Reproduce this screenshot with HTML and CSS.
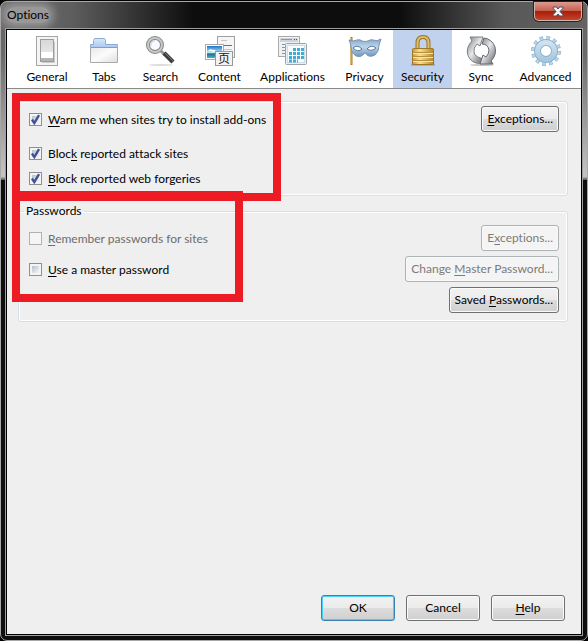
FILE: index.html
```html
<!DOCTYPE html>
<html lang="en">
<head>
    <meta charset="UTF-8">
    <meta name="viewport" content="width=device-width, initial-scale=1.0">
    <title>Options</title>
    <link rel="stylesheet" href="styles.css">
</head>
<body>
    <div class="window">
        <header class="titlebar">
            <h1>Options</h1>
            <button type="button" class="close-button" aria-label="Close">
                <svg width="12" height="11" viewBox="0 0 12 11"><path d="M1 1h3.4L6 3 7.600 1H11v1.200L8 5.500l3 3.300V10H7.600L6 8 4.400 10H1V8.800l3-3.300-3-3.300z" fill="#f4f4f4" stroke="#4a5068" stroke-width="1"/></svg>
            </button>
        </header>
        <div class="dialog">
            <nav class="toolbar">
                <button type="button" class="tab">
                    <svg width="32" height="32" viewBox="0 0 32 32">
                        <defs><linearGradient id="sw" x2="0" y2="1"><stop offset="0" stop-color="#d8d8d8"/><stop offset="1" stop-color="#eee"/></linearGradient></defs>
                        <rect x="5.500" y="1.500" width="21" height="29" fill="#f4f4f4" stroke="#a5a5a5"/>
                        <rect x="9.500" y="4.500" width="13" height="22" fill="url(#sw)" stroke="#9c9c9c"/>
                        <path d="M10 17h12v6H10z" fill="#fff"/><path d="M10 23h12v3H10z" fill="#b5b5b5"/><path d="M11 27.500h12.500V7" fill="none" stroke="#ccc"/>
                    </svg>
                    <span>General</span>
                </button>
                <button type="button" class="tab">
                    <svg width="32" height="32" viewBox="0 0 32 32">
                        <defs>
                            <linearGradient id="fd" x2="1" y2="1"><stop offset="0" stop-color="#e8e8e8"/><stop offset=".5" stop-color="#fbfbfb"/><stop offset="1" stop-color="#dedede"/></linearGradient>
                            <linearGradient id="fb" x2="0" y2="1"><stop offset="0" stop-color="#d8e8fc"/><stop offset="1" stop-color="#a9c8f0"/></linearGradient>
                        </defs>
                        <path d="M2.500 12.500v-3h3v-4l1-2h10l1 2v4h12v3z" fill="url(#fb)" stroke="#8fabd2"/>
                        <path d="M2.500 12.500h27v15h-27z" fill="url(#fd)" stroke="#aaa"/>
                        <path d="M3 12.500h26" stroke="#7e9fcd"/>
                    </svg>
                    <span>Tabs</span>
                </button>
                <button type="button" class="tab">
                    <svg width="32" height="32" viewBox="0 0 32 32">
                        <ellipse cx="16" cy="30" rx="12" ry="1" fill="#ddd"/>
                        <path d="M15 15l5 5" stroke="#999" stroke-width="3"/>
                        <path d="M19 18l9 9" stroke="#3d3d3d" stroke-width="4.500"/>
                        <path d="M20 18l8 8" stroke="#777" stroke-width="1"/>
                        <circle cx="10" cy="10" r="7" fill="#f8faff" stroke="#858585" stroke-width="4"/>
                        <circle cx="10" cy="10" r="7" fill="none" stroke="#c9c9c9" stroke-width="2"/>
                        <path d="M6 11a4 4 0 0 1 4-5" fill="none" stroke="#c6d2f0"/>
                    </svg>
                    <span>Search</span>
                </button>
                <button type="button" class="tab">
                    <svg width="32" height="32" viewBox="0 0 32 32">
                        <defs><linearGradient id="sky" x2="0" y2="1"><stop offset="0" stop-color="#1c74c8"/><stop offset=".55" stop-color="#bce9fa"/><stop offset=".65" stop-color="#2b6b83"/><stop offset="1" stop-color="#37b7c9"/></linearGradient></defs>
                        <rect x="13.500" y="1.500" width="17" height="21" fill="#f5f5f5" stroke="#a0a0a0"/>
                        <path d="M17 5.500h6M17 14.500h11M17 18.500h11" stroke="#c5c5c5"/><path d="M17 10.500h11" stroke="#1692aa"/>
                        <rect x="1.500" y="9.500" width="18" height="15" fill="#fff" stroke="#aaa"/>
                        <rect x="3" y="11" width="15" height="12" fill="url(#sky)"/><path d="M4 16q2-3 5-1 2-1 3 2z" fill="#fff"/>
                        <rect x="11.500" y="16.500" width="17" height="14" fill="#f3f3f3" stroke="#999"/>
                        <text x="20" y="28" class="glyph">页</text>
                    </svg>
                    <span>Content</span>
                </button>
                <button type="button" class="tab">
                    <svg width="32" height="32" viewBox="0 0 32 32">
                        <rect x="1.500" y="1.500" width="21" height="20" fill="#f1f1f1" stroke="#aaa"/>
                        <path d="M3 3h18v4H3z" fill="#ced4dc"/><path d="M4 4.500h11" stroke="#8c98a9"/><path d="M17 4.500h4" stroke="#555" stroke-dasharray="1 1"/>
                        <path d="M5 9.500h3M5 12.500h3M5 15.500h3M5 18.500h3" stroke="#8a95a2"/>
                        <rect x="8.500" y="8.500" width="21" height="21" rx="1" fill="#e4f0f6" stroke="#9ba4aa"/>
                        <rect x="10.500" y="10.500" width="17" height="17" fill="#fafdff" stroke="#cbdde8"/>
                        <path d="M16 14.500h11M12 18.500h15M12 22.500h15M12 26h9" stroke="#42acd3" stroke-width="3" stroke-dasharray="3 1"/>
                    </svg>
                    <span>Applications</span>
                </button>
                <button type="button" class="tab">
                    <svg width="34" height="32" viewBox="0 0 34 32">
                        <defs><linearGradient id="mk" x2="0" y2="1"><stop offset="0" stop-color="#87a8cb"/><stop offset=".45" stop-color="#bdd5e8"/><stop offset="1" stop-color="#6e94ba"/></linearGradient></defs>
                        <path d="M3.500 2v28" stroke="#a87916" stroke-width="2"/><path d="M3 3v26" stroke="#e4bd50"/>
                        <path d="M1 5q4 2 8 0 3-1 5 1 3 1 6 0 3-2 5-1 4 2 8-1-1 3-2 6 0 7-4 10-6 3-9-1-1-3-2 0-3 4-8 2-5-3-5-10-1-4-2-6z" fill="url(#mk)" stroke="#7794b5"/>
                        <path d="M5 13q4-4 9 1-4 4-9-1zM19 14q4-5 9-1-4 4-9 1z" fill="#fff" stroke="#54789f"/>
                    </svg>
                    <span>Privacy</span>
                </button>
                <button type="button" class="tab selected" aria-current="page">
                    <svg width="32" height="32" viewBox="0 0 32 32">
                        <defs><linearGradient id="lk" x2="1" y2="0"><stop offset="0" stop-color="#c99a36"/><stop offset=".35" stop-color="#f5df93"/><stop offset="1" stop-color="#b88526"/></linearGradient></defs>
                        <path d="M4 30.500h24l-1-3H5z" fill="#6a6d78" opacity=".6"/>
                        <path d="M10.500 14V8q0-6 5.500-6t5.500 6v6" fill="none" stroke="#9a7427" stroke-width="4"/>
                        <path d="M10.500 14V8q0-6 5.500-6t5.500 6v6" fill="none" stroke="#dfbd67" stroke-width="2"/>
                        <rect x="5.500" y="13.500" width="21" height="16" rx="1" fill="url(#lk)" stroke="#9f7628"/>
                        <path d="M6 17.500h20M6 21.500h20M6 25.500h20" stroke="#b98f3c"/><path d="M6 18.500h20M6 22.500h20M6 26.500h20" stroke="#f8e5a5"/>
                    </svg>
                    <span>Security</span>
                </button>
                <button type="button" class="tab">
                    <svg width="32" height="32" viewBox="0 0 32 32">
                        <defs><linearGradient id="sy" x2="1" y2="1"><stop offset="0" stop-color="#777b80"/><stop offset=".45" stop-color="#e6e8ea"/><stop offset="1" stop-color="#5c6065"/></linearGradient></defs>
                        <ellipse cx="17" cy="30" rx="12" ry="1" fill="#c5c5c5"/>
                        <path d="M5 2h13l-3 9-3-2q-4 4-3 8 1 5 7 6l3 5q-9 2-14-4-5-7-1-14 1-2 3-4z" fill="url(#sy)" stroke="#7c8085"/>
                        <path d="M28 29H15l3-9 3 2q3-3 3-7-1-6-7-6l2-6q8 1 11 9 2 8-4 14z" fill="url(#sy)" stroke="#64686d"/>
                    </svg>
                    <span>Sync</span>
                </button>
                <button type="button" class="tab">
                    <svg width="32" height="32" viewBox="0 0 32 32">
                        <defs><linearGradient id="gr" x2="0" y2="1"><stop offset="0" stop-color="#d0e2f1"/><stop offset="1" stop-color="#a6c8e0"/></linearGradient></defs>
                        <circle cx="16" cy="16" r="13" fill="none" stroke="#8fb0cc" stroke-width="4" stroke-dasharray="3.600 3.207"/>
                        <circle cx="16" cy="16" r="12.500" fill="none" stroke="#bdd6e9" stroke-width="4" stroke-dasharray="2.200 4.345" stroke-dashoffset="-.6"/>
                        <circle cx="16" cy="16" r="8.500" fill="none" stroke="#8fb1cc" stroke-width="7"/>
                        <circle cx="16" cy="16" r="8.500" fill="none" stroke="url(#gr)" stroke-width="5"/>
                    </svg>
                    <span>Advanced</span>
                </button>
            </nav>
            <main class="pane">
                <form class="panel">
                    <div class="group">
                        <div class="checks">
                            <label class="check first"><input type="checkbox" checked><span><u>W</u>arn me when sites try to install add-ons</span></label>
                            <label class="check"><input type="checkbox" checked><span>Bloc<u>k</u> reported attack sites</span></label>
                            <label class="check"><input type="checkbox" checked><span><u>B</u>lock reported web forgeries</span></label>
                        </div>
                        <div class="actions">
                            <button type="button" class="button"><span><u>E</u>xceptions...</span></button>
                        </div>
                    </div>
                    <fieldset class="group passwords">
                        <legend>Passwords</legend>
                        <div class="checks">
                            <label class="check disabled"><input type="checkbox" disabled><span><u>R</u>emember passwords for sites</span></label>
                            <label class="check"><input type="checkbox"><span><u>U</u>se a master password</span></label>
                        </div>
                        <div class="actions">
                            <button type="button" class="button" disabled><span>E<u>x</u>ceptions...</span></button>
                            <button type="button" class="button" disabled><span>Change <u>M</u>aster Password...</span></button>
                            <button type="button" class="button"><span>Saved <u>P</u>asswords...</span></button>
                        </div>
                    </fieldset>
                </form>
                <footer class="footer">
                    <button type="button" class="button default">OK</button>
                    <button type="button" class="button">Cancel</button>
                    <button type="button" class="button"><span><u>H</u>elp</span></button>
                </footer>
                <div class="mark mark-addons"></div>
                <div class="mark mark-passwords"></div>
            </main>
        </div>
    </div>
</body>
</html>
```
FILE: styles.css
```css
* {
    box-sizing: border-box;
}
body {
    margin: 0;
    padding-top: 1px;
    min-height: 100vh;
    display: flex;
    background: #000;
    color: #000;
    font-family: Lato, "Open Sans", sans-serif;
    font-size: 12px;
    line-height: 16px;
    font-variant-ligatures: none;
}
button {
    font: inherit;
    font-variant-ligatures: none;
    color: inherit;
}
u {
    text-decoration: underline;
    text-underline-offset: 2px;
    text-decoration-skip-ink: none;
}
.window {
    flex: 1;
    display: flex;
    flex-direction: column;
    padding: 0 5px 5px;
    border: 1px solid #a8a8a8;
    border-radius: 7px;
    background:
        linear-gradient(90deg, #6b6b6b 0, #5e5e5e 12%, #0d0d0d 33%, #0d0d0d 68%, #585858 86%, #636363 100%) top / 100% 27px no-repeat,
        linear-gradient(#606060 0, #6b6b6b 30%, #c4c4c4 98%, #555 100%) top / 100% 178px no-repeat,
        #0d0f0f;
}
.titlebar {
    display: flex;
    justify-content: space-between;
    align-items: flex-start;
    height: 27px;
}
h1 {
    margin: 5px 0 0;
    padding: 0 1px;
    font-size: 12px;
    font-weight: normal;
    border-radius: 8px;
    background: rgba(165, 165, 165, 0.8);
    box-shadow: 0 0 8px 4px rgba(165, 165, 165, 0.8);
}
.close-button {
    display: flex;
    justify-content: center;
    align-items: center;
    width: 48px;
    height: 19px;
    padding: 0;
    border: 1px solid #d0b4b0;
    border-top: none;
    border-radius: 0 0 5px 5px;
    background: linear-gradient(#dc9a90 0, #c8604f 48%, #a81c08 50%, #c4442a 100%);
    box-shadow: 0 0 0 1px #3c1a16;
}
.dialog {
    flex: 1;
    display: flex;
    flex-direction: column;
    border: 1px solid #000;
    background: #efefef;
    box-shadow: 0 0 0 1px #a0a0a0;
}
.toolbar {
    display: grid;
    grid-template-columns: 60fr 54fr 59fr 59fr 87fr 57fr 59fr 58fr 71fr;
    padding-left: 10px;
    background: #fff;
    border-bottom: 1px solid #8a8a8a;
}
.tab {
    display: flex;
    flex-direction: column;
    align-items: center;
    gap: 2px;
    height: 58px;
    padding: 5px 0 0;
    border: none;
    background: none;
    white-space: nowrap;
}
.tab.selected {
    background: #c1d2ee;
}
.tab svg {
    flex: none;
}
.glyph {
    font: 12px "Noto Sans CJK SC", sans-serif;
    text-anchor: middle;
    fill: #222;
}
.pane {
    position: relative;
    flex: 1;
    display: flex;
    flex-direction: column;
    justify-content: space-between;
    padding: 12px 13px 13px 11px;
}
.panel {
    display: flex;
    flex-direction: column;
    gap: 7px;
}
.group {
    display: flex;
    justify-content: space-between;
    margin: 0;
    padding: 4px 8px 8px 10px;
    border: 1px solid #d5dfe5;
    border-radius: 3px;
    box-shadow: inset 0 0 0 1px #fff;
}
.checks {
    display: flex;
    flex-direction: column;
    gap: 9px;
    padding-top: 6px;
}
.check {
    display: flex;
    align-items: flex-start;
    gap: 6px;
}
.check.first {
    margin-bottom: 9px;
}
.check.disabled {
    color: #6d6d6d;
}
.check input {
    appearance: none;
    width: 13px;
    height: 13px;
    margin: 1px 0 0;
    border: 1px solid #8e8f8f;
    background: linear-gradient(135deg, #b8c0cb, #f6f6f6) content-box, #f4f4f4;
    padding: 2px;
}
.check input:checked {
    background: url("data:image/svg+xml,%3Csvg xmlns='http://www.w3.org/2000/svg' viewBox='0 0 11 11'%3E%3Cpath d='M2.500 5.500L4.500 8.500L8.500 1.800' fill='none' stroke='%233f5396' stroke-width='2'/%3E%3C/svg%3E") border-box, linear-gradient(135deg, #b8c0cb, #f6f6f6) content-box, #f4f4f4;
}
.check input:disabled {
    border-color: #b1b1b1;
    background: #f5f5f5;
}
.actions {
    display: flex;
    flex-direction: column;
    align-items: flex-end;
    gap: 5px;
}
.button {
    min-width: 74px;
    height: 26px;
    padding: 0 5px;
    border: 1px solid #707070;
    border-radius: 3px;
    background: linear-gradient(#f2f2f2 0, #ebebeb 49%, #dddddd 50%, #cfcfcf 100%);
    box-shadow: inset 0 0 0 1px #fafafa;
    white-space: nowrap;
}
.button:disabled {
    border-color: #adb2b5;
    background: #f4f4f4;
    color: #7b7b7b;
}
.button.default {
    border-color: #3c7fb1;
    box-shadow: inset 0 0 0 1px #48d0f8;
}
.passwords {
    padding-top: 6px;
}
.passwords legend {
    padding: 0 2px;
    margin-left: -5px;
}
.passwords .checks {
    gap: 15px;
}
.footer {
    display: flex;
    justify-content: flex-end;
    gap: 11px;
    padding-right: 3px;
}
/* red callout frames drawn over the options */
.mark {
    position: absolute;
    left: 5px;
    border: 8px solid #ed1c24;
    pointer-events: none;
}
.mark-addons {
    top: 4px;
    width: 269px;
    height: 108px;
}
.mark-passwords {
    top: 102px;
    width: 231px;
    height: 111px;
    border-top-width: 10px;
}
```
